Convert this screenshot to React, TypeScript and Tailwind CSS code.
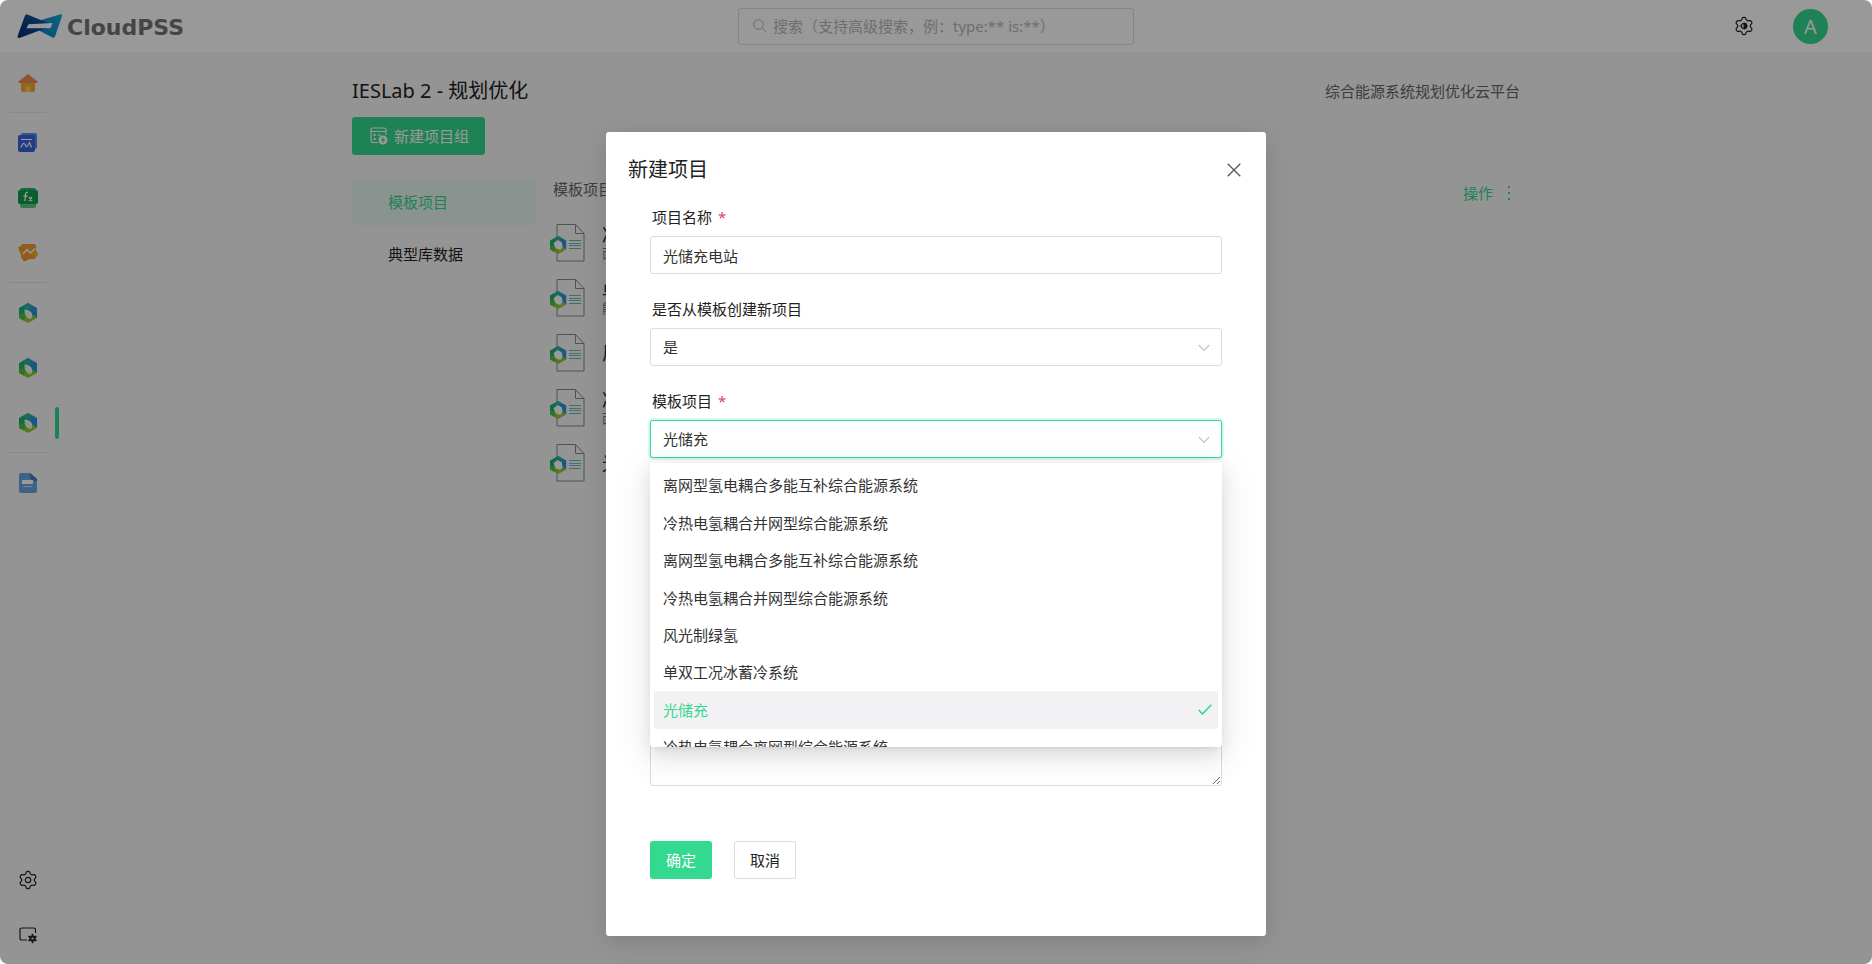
import { useState } from "react";
import type { ReactNode } from "react";

const templates = [
  "离网型氢电耦合多能互补综合能源系统",
  "冷热电氢耦合并网型综合能源系统",
  "离网型氢电耦合多能互补综合能源系统",
  "冷热电氢耦合并网型综合能源系统",
  "风光制绿氢",
  "单双工况冰蓄冷系统",
  "光储充",
  "冷热电氢耦合离网型综合能源系统",
];

const projects = [
  { title: "冷热电氢耦合并网型", note: "面向园区" },
  { title: "单双工况冰蓄冷系统", note: "能源系统" },
  { title: "风光制绿氢", note: "" },
  { title: "冷热电氢耦合离网型", note: "面向园区" },
  { title: "光储充", note: "" },
];

function gearPath(cx: number, cy: number, inner: number, outer: number): string {
  const steps = 96;
  const points: string[] = [];
  for (let i = 0; i < steps; i++) {
    const a = (i / steps) * Math.PI * 2 - Math.PI / 2;
    const wave = Math.tanh(2 * Math.cos(6 * (a + Math.PI / 2))) / Math.tanh(2);
    const r = (inner + outer) / 2 + ((outer - inner) / 2) * wave;
    points.push(`${(cx + r * Math.cos(a)).toFixed(2)} ${(cy + r * Math.sin(a)).toFixed(2)}`);
  }
  return `M${points.join("L")}Z`;
}

function LogoMark() {
  return (
    <svg width="46" height="26" viewBox="0 0 46 26" aria-hidden="true">
      <defs>
        <linearGradient id="logoL" x1="0" y1="1" x2="1" y2="0">
          <stop offset="0" stopColor="#032a72" />
          <stop offset="1" stopColor="#0f5fae" />
        </linearGradient>
        <linearGradient id="logoR" x1="0" y1="1" x2="1" y2="0">
          <stop offset="0" stopColor="#0a7ec0" />
          <stop offset="1" stopColor="#1aa6dc" />
        </linearGradient>
      </defs>
      <path d="M21 8L43.500 1.200Q45.500 1 45 3L38 23.500Q37.300 25.500 35.500 24.500L21 17Z" fill="url(#logoR)" />
      <path d="M8 2.500Q9 .8 11 1.800L31 10V15L24 17L3 24.800Q0 25.500 .6 23Z" fill="url(#logoL)" />
      <path d="M11.500 11.200L35.500 10L33.500 15.300H9.500Z" fill="#fff" />
    </svg>
  );
}

function HomeIcon() {
  return (
    <svg width="20" height="18" viewBox="0 0 20 18" aria-hidden="true">
      <path d="M3 7H17V16Q17 18 15 18H5Q3 18 3 16Z" fill="#f5a92c" />
      <path d="M9 .7Q10 0 11 .7L19.500 7.500Q20 9 18.500 9H1.500Q0 9 .5 7.500Z" fill="#f08a4c" />
      <path d="M7.500 18V14Q7.500 12 10 12T12.500 14V18Z" fill="#ffc95a" />
    </svg>
  );
}

function ChartIcon() {
  return (
    <svg width="20" height="19" viewBox="0 0 20 19" aria-hidden="true">
      <rect x="3" y="0" width="16" height="16" rx="2" fill="#4b93e6" />
      <rect x="0" y="2" width="17" height="17" rx="2" fill="#3b62dc" />
      <path d="M3 6.500H14M3 14.500Q5 9 6.500 11T8.500 13.500T11.500 9.500L13.500 14.500" fill="none" stroke="#fff" strokeWidth="1.200" />
    </svg>
  );
}

function FunctionIcon() {
  return (
    <svg width="20" height="20" viewBox="0 0 20 20" aria-hidden="true">
      <rect x="2" y="8" width="16" height="12" rx="2" fill="#5cc98a" />
      <rect x="2" y="0" width="16" height="4" rx="2" fill="#2cae66" />
      <rect x="0" y="2" width="20" height="14" rx="2" fill="#0f9d4c" />
      <path d="M10 4.500Q7.500 3.500 7.500 7L7 13M5.500 8H9.500M11 9L14 13M14 9L11 13" fill="none" stroke="#fff" strokeWidth="1.300" />
    </svg>
  );
}

function WaveIcon() {
  return (
    <svg width="20" height="19" viewBox="0 0 20 19" aria-hidden="true">
      <path d="M1.500 3.500L14 1L19 13L7 18Q5.500 18.500 4.800 17L.6 5.500Q.3 4 1.500 3.500Z" fill="#e89a20" />
      <rect x="3" y="1" width="15" height="15" rx="2" fill="#f59a34" />
      <path d="M5 11L9 6.500L12.500 10L17 5.500" fill="none" stroke="#fff" strokeWidth="1.500" />
      <circle cx="17.500" cy="11" r="2.500" fill="#f3b51c" />
    </svg>
  );
}

function HexShape() {
  return (
    <>
      <path d="M9 0L0 5V15L9 10Z" fill="#19b26c" />
      <path d="M9 0L18 5V15L9 10Z" fill="#2a94d4" />
      <path d="M9 0L13 2.500L9 10L4 3Z" fill="#2bb0a8" />
      <path d="M0 15L9 20L18 15L9 8Z" fill="#94c832" />
      <path d="M0 11V15L4.500 17.500L9 10Z" fill="#4fc048" />
    </>
  );
}

function HexIcon() {
  return (
    <svg width="18" height="20" viewBox="0 0 18 20" aria-hidden="true">
      <HexShape />
      <path d="M5.500 6.500Q12 7 13 11Q13.500 14 12 16Q5 15.500 5.500 6.500Z" fill="#f4f8f0" />
      <path d="M7 8.500L12 15" stroke="#cfe9dc" strokeWidth=".6" />
    </svg>
  );
}

function DocIcon() {
  return (
    <svg width="18" height="20" viewBox="0 0 18 20" aria-hidden="true">
      <path d="M2 0H11L18 6V18Q18 20 16 20H2Q0 20 0 18V2Q0 0 2 0Z" fill="#6aa3e4" />
      <path d="M11 0L18 6V8Q11 8 11 3Z" fill="#4478b8" />
      <path d="M3 8H14M3 10H14" stroke="#fff" strokeWidth="2" />
      <path d="M4 13.500H13" stroke="#c9def7" />
    </svg>
  );
}

function GearIcon({ bright }: { bright?: boolean }) {
  return (
    <svg width="20" height="20" viewBox="0 0 20 20" aria-hidden="true">
      <path d={gearPath(10, 10, 6.4, 8.6)} fill="none" stroke="#222" strokeWidth="1.200" strokeLinejoin="round" />
      <circle cx="10" cy="10" r="2.700" fill="none" stroke="#222" strokeWidth="1.200" />
      {bright && <path d="M10 7A3 3 0 0 1 10 13Z M5.500 10H7" fill="#222" stroke="#222" />}
    </svg>
  );
}

function ScreenGearIcon() {
  return (
    <svg width="20" height="18" viewBox="0 0 20 18" aria-hidden="true">
      <path d="M17.500 7V4Q17.500 2 15.500 2H4Q2 2 2 4V12Q2 14 4 14H9" fill="none" stroke="#222" strokeWidth="1.200" />
      <path d={gearPath(14.5, 12.5, 2.9, 4.7)} fill="#222" />
      <circle cx="14.500" cy="12.500" r="1.100" fill="#f7f7f7" />
    </svg>
  );
}

function ProjectIcon() {
  return (
    <svg width="36" height="38" viewBox="0 0 36 38" className="shrink-0" aria-hidden="true">
      <path d="M7 .5H25.500L34 9.500V37H7Z" fill="none" stroke="#888" />
      <path d="M25.500 .5V9.500H34" fill="none" stroke="#888" />
      <path d="M19 16.500H31M19 24.500H31" stroke="#55c5a8" />
      <path d="M19 19.500H31M19 21.500H31" stroke="#7fb4cf" />
      <g transform="translate(0 12) scale(.9)">
        <HexShape />
        <path d="M8.500 4.500L13 7L14 12L11.500 15.500L6 13.500L4 8Z" fill="#fff" />
      </g>
    </svg>
  );
}

function NewGroupIcon() {
  return (
    <svg width="18" height="18" viewBox="0 0 18 18" fill="none" stroke="#fff" strokeWidth="1.200" aria-hidden="true">
      <path d="M8 15.500H3Q1 15.500 1 13.500V3Q1 1 3 1H14Q16 1 16 3V8M1 4.500H16M3 8H6M4.500 6.800V9.200M3 12H6M4.500 10.800V13.200M7.500 8H11" />
      <circle cx="13" cy="13" r="4.500" fill="#fff" stroke="none" />
      <path d="M10.500 13H15.500M13 10.500V15.500" stroke="#33d98f" />
    </svg>
  );
}

function Chevron() {
  return (
    <svg width="12" height="8" viewBox="0 0 12 8" className="pointer-events-none absolute top-4 right-3" aria-hidden="true">
      <path d="M.8 1L6 6.500L11.200 1" fill="none" stroke="#c4c4c4" strokeWidth="1.200" />
    </svg>
  );
}

function SideLink({ label, active, children }: { label: string; active?: boolean; children: ReactNode }) {
  return (
    <a href="#" aria-label={label} className="relative flex h-[55px] w-[55px] items-center justify-center">
      {children}
      {active && <span className="absolute left-full h-8 w-1 rounded-full bg-[#33d98f]" />}
    </a>
  );
}

function SideDivider() {
  return <hr className="my-0.5 ml-[9px] w-[38px] border-[#e2e2e2]" />;
}

function Field({ id, label, required, children }: { id: string; label: string; required?: boolean; children: ReactNode }) {
  return (
    <div className="flex flex-col gap-[7px]">
      <label htmlFor={id} className="pl-0.5 leading-6 text-[#222]">
        {label}
        {required && <span className="ml-1.5 text-[#e0446c]">*</span>}
      </label>
      {children}
    </div>
  );
}

const control =
  "block h-[38px] w-full appearance-none rounded-[3px] border border-[#dcdcdc] bg-white px-3 text-[#333] outline-none";

export default function App() {
  const [name, setName] = useState("光储充电站");
  const [fromTemplate, setFromTemplate] = useState("是");
  const [template, setTemplate] = useState("光储充");

  return (
    <div className="relative flex min-h-screen flex-col overflow-hidden rounded-lg bg-[#f7f7f7] font-['Noto_Sans','Noto_Sans_CJK_SC',sans-serif] text-[15px] text-[#222]">
      <header className="grid h-[52px] grid-cols-[1fr_396px_1fr] items-center bg-white">
        <a href="#" className="flex items-center gap-1 pl-[17px]">
          <LogoMark />
          <span className="pt-1 font-['DejaVu_Sans',sans-serif] text-[22px] leading-6 font-bold text-[#747474]">CloudPSS</span>
        </a>
        <label className="flex h-[37px] items-center gap-1.5 rounded-[3px] border border-[#dcdcdc] pl-3.5">
          <svg width="14" height="14" viewBox="0 0 14 14" fill="none" stroke="#b4b4b4" aria-hidden="true">
            <circle cx="5.500" cy="5.500" r="4.800" />
            <path d="M9 9L13.500 13.500" />
          </svg>
          <input
            type="search"
            aria-label="搜索"
            placeholder="搜索（支持高级搜索，例：type:** is:**）"
            className="min-w-0 flex-1 bg-transparent outline-none placeholder:text-[#b8b8b8]"
          />
        </label>
        <div className="flex items-center justify-end gap-[39px] pr-11">
          <button type="button" aria-label="主题设置">
            <GearIcon bright />
          </button>
          <button type="button" aria-label="账户" className="h-[35px] w-[35px] rounded-full bg-[#33d98f] text-xl leading-[35px] text-white">
            A
          </button>
        </div>
      </header>

      <div className="flex flex-1">
        <aside className="flex w-[60px] flex-col justify-between pt-[3px] pb-0.5">
          <nav>
            <SideLink label="首页"><HomeIcon /></SideLink>
            <SideDivider />
            <SideLink label="仿真"><ChartIcon /></SideLink>
            <SideLink label="函数"><FunctionIcon /></SideLink>
            <SideLink label="应用"><WaveIcon /></SideLink>
            <SideDivider />
            <SideLink label="能源一"><HexIcon /></SideLink>
            <SideLink label="能源二"><HexIcon /></SideLink>
            <SideLink label="规划优化" active><HexIcon /></SideLink>
            <SideDivider />
            <SideLink label="文档"><DocIcon /></SideLink>
          </nav>
          <div>
            <SideLink label="设置"><GearIcon /></SideLink>
            <SideLink label="显示设置"><ScreenGearIcon /></SideLink>
          </div>
        </aside>

        <main className="flex-1 pt-6 pr-[60px]">
          <div className="mx-auto max-w-[1168px]">
            <div className="flex items-center justify-between">
              <h1 className="text-xl leading-[30px]">IESLab 2 - 规划优化</h1>
              <p className="text-[#666]">综合能源系统规划优化云平台</p>
            </div>
            <button type="button" className="mt-[11px] flex h-[38px] items-center gap-1.5 rounded-[3px] bg-[#33d98f] pr-4 pl-[18px] text-white">
              <NewGroupIcon />
              新建项目组
            </button>
            <div className="mt-[25px] flex gap-3.5">
              <nav className="flex w-[184px] flex-col gap-[7px] leading-[45px]">
                <a href="#" className="rounded-sm bg-[#e6f6ee] pl-9 text-[#33d98f]">模板项目</a>
                <a href="#" className="pl-9">典型库数据</a>
              </nav>
              <section className="flex-1">
                <div className="flex h-[35px] items-start justify-between pl-[3px]">
                  <h2 className="leading-[18px] text-[#666]">模板项目</h2>
                  <button type="button" className="flex items-center gap-[15px] pr-[9px] leading-[26px] text-[#33d98f]">
                    操作
                    <svg width="3" height="14" viewBox="0 0 3 14" fill="#33d98f" aria-hidden="true">
                      <path d="M0 0H2V2H0ZM0 6H2V8H0ZM0 12H2V14H0Z" />
                    </svg>
                  </button>
                </div>
                <ul>
                  {projects.map((p, i) => (
                    <li key={i} className="flex h-[55px] items-center gap-4">
                      <ProjectIcon />
                      <div>
                        <div className="text-lg leading-5">{p.title}</div>
                        {p.note && <div className="text-[13px] leading-4 text-[#777]">{p.note}</div>}
                      </div>
                    </li>
                  ))}
                </ul>
              </section>
            </div>
          </div>
        </main>
      </div>

      <div className="absolute inset-0 flex items-start justify-center bg-black/40 pt-[132px]">
        <div role="dialog" aria-modal="true" aria-labelledby="dialog-title" className="w-full max-w-[660px] rounded-[3px] bg-white shadow-[0_6px_24px_rgba(0,0,0,0.14)]">
          <div className="flex items-center justify-between px-[22px] pt-6">
            <h2 id="dialog-title" className="text-xl leading-7">新建项目</h2>
            <button type="button" aria-label="关闭" className="flex w-5 justify-center">
              <svg width="14" height="14" viewBox="0 0 14 14" fill="none" stroke="#555" strokeWidth="1.300" aria-hidden="true">
                <path d="M.7 .7L13.300 13.300M13.300 .7L.7 13.300" />
              </svg>
            </button>
          </div>
          <form className="flex flex-col gap-[23px] px-11 pt-[21px] pb-[57px]" onSubmit={(e) => e.preventDefault()}>
            <Field id="name" label="项目名称" required>
              <input id="name" value={name} onChange={(e) => setName(e.target.value)} className={control} />
            </Field>
            <Field id="from" label="是否从模板创建新项目">
              <div className="relative">
                <select id="from" value={fromTemplate} onChange={(e) => setFromTemplate(e.target.value)} className={control}>
                  <option>是</option>
                  <option>否</option>
                </select>
                <Chevron />
              </div>
            </Field>
            <Field id="template" label="模板项目" required>
              <div className="relative">
                <select
                  id="template"
                  value={template}
                  onChange={(e) => setTemplate(e.target.value)}
                  className="block h-[38px] w-full appearance-none rounded-[3px] border border-[#33d98f] bg-white px-3 text-[#333] shadow-[0_0_0_2px_rgba(51,217,143,0.2)] outline-none"
                >
                  {[...new Set(templates)].map((t) => (
                    <option key={t}>{t}</option>
                  ))}
                </select>
                <Chevron />
                <div className="absolute top-full right-0 left-0 z-10 mt-[5px] h-[284px] overflow-hidden rounded-[3px] bg-white px-1 pt-1 shadow-[0_3px_6px_-4px_rgba(0,0,0,0.14),0_6px_18px_rgba(0,0,0,0.1),0_10px_32px_8px_rgba(0,0,0,0.06)]">
                  <ul role="listbox" aria-label="模板项目" className="grid h-[299px] auto-rows-fr">
                    {templates.map((t, i) => (
                      <li
                        key={i}
                        role="option"
                        aria-selected={t === template}
                        onClick={() => setTemplate(t)}
                        className={
                          t === template
                            ? "flex items-center justify-between rounded-[3px] bg-[#f2f2f4] pr-1.5 pl-[9px] text-[#33d98f]"
                            : "flex items-center justify-between rounded-[3px] pr-1.5 pl-[9px] text-[#333]"
                        }
                      >
                        {t}
                        {t === template && (
                          <svg width="14" height="11" viewBox="0 0 14 11" fill="none" stroke="#33d98f" strokeWidth="1.600" aria-hidden="true">
                            <path d="M.7 6L4.500 10L13.300 .7" />
                          </svg>
                        )}
                      </li>
                    ))}
                  </ul>
                </div>
              </div>
            </Field>
            <textarea aria-label="项目描述" className="mt-[31px] block h-[274px] w-full resize rounded-[3px] border border-[#dcdcdc] bg-white px-3 py-1.5 outline-none" />
            <div className="mt-8 flex gap-[22px]">
              <button type="submit" className="h-[38px] rounded-[3px] bg-[#33d98f] px-4 text-white">确定</button>
              <button type="button" className="h-[38px] rounded-[3px] border border-[#dcdcdc] bg-white px-[15px] text-[#222]">取消</button>
            </div>
          </form>
        </div>
      </div>
    </div>
  );
}
